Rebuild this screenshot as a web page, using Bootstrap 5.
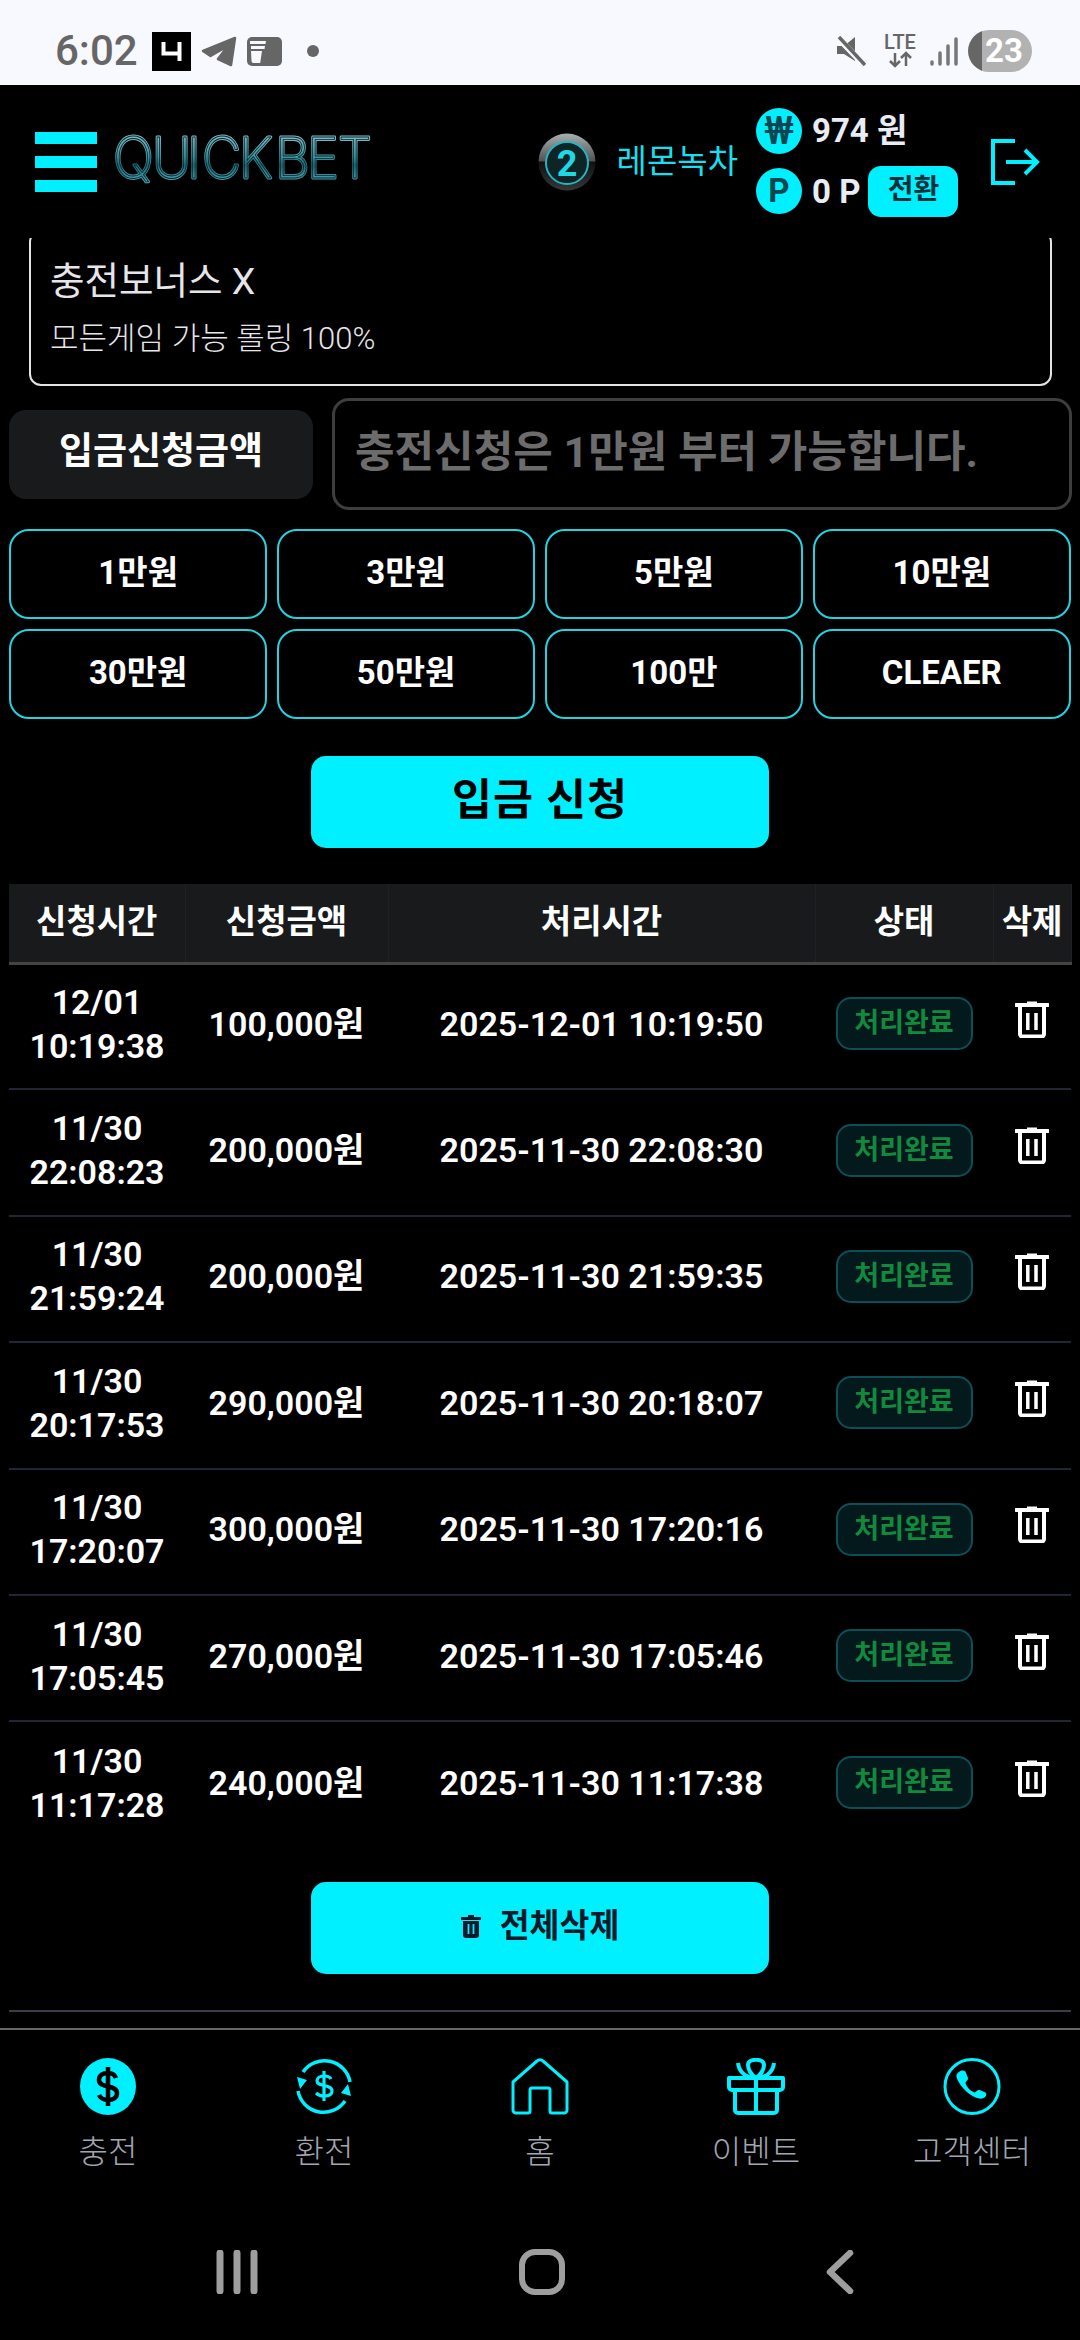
<!DOCTYPE html>
<html lang="ko">
<head>
<meta charset="UTF-8" />
<title>QUICKBET 입금신청</title>
<link href="https://cdn.jsdelivr.net/npm/bootstrap@5.3.2/dist/css/bootstrap.min.css" rel="stylesheet" />
<style>
body { background: #000; color: #fff; font-family: Roboto, "Noto Sans CJK KR", sans-serif; overflow: hidden; }
.app-shell { height: 2340px; width: 1080px; }
.status-strip { height: 85px; background: #f8f8ff; padding: 17px 48px 0 55px; color: #666; flex: none; }
.status-time { font-size: 42px; font-weight: 500; line-height: 1; margin-right: 3px; width: 84px; white-space: nowrap; }
.status-left { gap: 10px; }
.status-dot { width: 12px; height: 12px; border-radius: 50%; background: #666; margin-left: 15px; }
.status-right { gap: 13px; }
.batt-pill { width: 64px; height: 42px; border-radius: 21px; background: linear-gradient(90deg, #666 22%, #b2b2b2 22%); color: #fff; font-weight: 700; font-size: 33px; line-height: 42px; text-align: center; margin-left: -3px; padding-left: 8px; }
.top-head { height: 153px; padding: 0 40px 0 35px; background: #000; flex: none; position: relative; z-index: 2; }
.burger-bars { width: 62px; gap: 12px; margin-right: 17px; }
.burger-bars span { height: 12px; background: #00f0ff; }
.nick-name { color: #18dfee; font-size: 33px; font-weight: 400; margin: 0 18px 0 21px; white-space: nowrap; }
.money-col { gap: 10px; width: 234px; }
.coin-dot { width: 46px; height: 46px; border-radius: 50%; background: #00f0ff; color: #0c4650; font-weight: 700; font-size: 33px; line-height: 46px; text-align: center; margin-right: 10px; flex: none; }
.coin-won { font-size: 38px; font-weight: 500; }
.money-val { font-size: 33px; font-weight: 700; color: #e8ecf4; white-space: nowrap; }
.swap-btn { background: #00f0ff; color: #06303a; border: 0; border-radius: 13px; width: 90px; height: 51px; font-size: 28px; font-weight: 700; padding: 0 0 2px; margin-left: 8px; }
.page-body { padding: 0 9px; min-height: 0; overflow: hidden; }
.promo-box { margin: -8px 19px 0 20px; height: 156px; border: 2px solid #e4e4e8; border-radius: 12px; padding: 24px 19px 0; color: #e6e6ea; }
.promo-title { font-size: 37.500px; line-height: 50px; margin-bottom: 11px; }
.promo-sub { font-size: 31px; line-height: 44px; font-weight: 300; }
.amount-row { margin-top: 12px; gap: 19px; }
.amount-label { width: 304px; height: 89px; background: #191a1c; border-radius: 17px; font-size: 37px; font-weight: 700; flex: none; padding-bottom: 4px; }
.amount-input { height: 112px; border: 3px solid #3e3e3e; border-radius: 17px; background: #000; font-size: 43px; font-weight: 700; padding: 0 20px 5px; color: #fff; margin-right: -1px; }
.amount-input::placeholder { color: #6c6c6c; opacity: 1; }
.chip-grid { display: grid; grid-template-columns: repeat(4, 1fr); gap: 10px 9.5px; margin-top: 19px; }
.chip-btn { height: 90px; background: #000; border: 2px solid #22d3e3; border-radius: 20px; color: #fff; font-size: 33px; font-weight: 700; padding: 0 0 3px; }
.cyan-btn { display: flex; align-items: center; justify-content: center; width: 458px; height: 92px; background: #00f0ff; border: 0; border-radius: 15px; margin-left: auto; margin-right: auto; padding: 0 0 3px; font-weight: 700; }
.apply-btn { font-size: 43.500px; color: #000; margin-top: 37px; letter-spacing: 1px; }
.wipe-btn { font-size: 32.500px; color: #0b1a2a; gap: 19px; margin-top: 34px; }
.hist-table { --bs-table-bg: transparent; --bs-table-color: #fff; table-layout: fixed; width: 1062px; margin: 36px 0 0; }
.hist-table th { background: #191a1c; height: 79px; font-size: 33px; font-weight: 700; color: #fff; border-bottom: 3px solid #444; border-right: 1px solid #202124; padding: 0 0 2px; text-align: center; vertical-align: middle; }
.hist-table td { height: 126.4px; font-size: 34px; font-weight: 600; line-height: 44px; border-bottom: 2px solid #1f2736; padding: 0 0 5px; text-align: center; vertical-align: middle; white-space: nowrap; }
.hist-table tbody tr:last-child td { border-bottom: 0; }
.done-tag { display: inline-block; width: 137px; height: 53px; line-height: 49px; border: 2px solid #0d4f55; border-radius: 15px; background: #04191c; color: #128a3e; font-size: 27px; font-weight: 700; }
.trash-ic { display: block; margin: 0 auto 10px; color: #fff; }
.page-rule { height: 2px; background: #3a3d47; margin-top: 36px; flex: none; }
.tab-row { border-top: 2px solid #666; height: 312px; flex: none; }
.tab-cell { width: 216px; padding-top: 28px; color: #a2a6b2; font-size: 32px; font-weight: 300; line-height: 40px; gap: 17px; }
.soft-keys { height: 46px; margin-top: 77px; padding: 0 226px 0 216px; }
</style>
</head>
<body>
<svg width="0" height="0" class="position-absolute">
  <defs>
    <symbol id="trash-sym" viewBox="0 0 34 38">
      <path d="M12 3V1.500h10V3h11a1 1 0 0 1 0 4H1a1 1 0 0 1 0-4z" fill="currentColor" />
      <path d="M5 6v28a2.500 2.500 0 0 0 2.500 2.500h19A2.500 2.500 0 0 0 29 34V6" fill="none" stroke="currentColor" stroke-width="4" />
      <path d="M12.800 13v17M21 13v17" fill="none" stroke="currentColor" stroke-width="3.500" />
    </symbol>
    <linearGradient id="logo-grad" x1="0" y1="0" x2="0" y2="1">
      <stop offset="0" stop-color="#a8d4da" />
      <stop offset=".5" stop-color="#3f96a4" />
      <stop offset=".62" stop-color="#1f6a78" />
      <stop offset="1" stop-color="#63c8d6" />
    </linearGradient>
    <linearGradient id="lvl-grad" x1="0" y1="0" x2="0" y2="1">
      <stop offset="0" stop-color="#a9aeb0" />
      <stop offset=".48" stop-color="#4e5356" />
      <stop offset=".5" stop-color="#111" />
      <stop offset="1" stop-color="#33363a" />
    </linearGradient>
    <text id="logo-word" transform="scale(1 1.050)" x="-1 38 73 88 125 161 193 224" y="39" font-family="Inter, Roboto, sans-serif" font-size="54" font-weight="200" stroke-linejoin="round">QUICKBET</text>
  </defs>
</svg>

<div class="app-shell d-flex flex-column">
  <div class="status-strip d-flex align-items-center justify-content-between">
    <div class="status-left d-flex align-items-center">
      <span class="status-time">6:02</span>
      <svg width="39" height="39" viewBox="0 0 39 39"><rect width="39" height="39" fill="#000" /><path d="M11.500 10v11.500H29M27.500 10v19" fill="none" stroke="#fff" stroke-width="4" /></svg>
      <svg width="36" height="31" viewBox="0 0 36 31"><path d="M2 15 34 2 30 29 17 23 27 10 9.500 20z" fill="#666" stroke="#666" stroke-width="2.500" stroke-linejoin="round" /></svg>
      <svg width="35" height="29" viewBox="0 0 35 29"><rect width="35" height="29" rx="5" fill="#666" /><path d="M3 4h16l-.5 3H3zM4 9h14l-.5 3H4zM4 14h11l-1.800 12H6.500a2 2 0 0 1-2-2z" fill="#f8f8ff" /></svg>
      <span class="status-dot"></span>
    </div>
    <div class="status-right d-flex align-items-center">
      <svg width="30" height="30" viewBox="0 0 30 30" class="me-1"><path d="M1 10h7l11-9v24L8 18H1z" fill="#666" /><path d="M3 3l25 26" stroke="#f8f8ff" stroke-width="6" /><path d="M3 1l26 28" stroke="#666" stroke-width="3.500" /></svg>
      <svg width="34" height="44" viewBox="0 -6 34 44"><text x="17" y="14" font-size="20" font-weight="500" text-anchor="middle" fill="#666" font-family="Roboto">LTE</text><path d="M12 18v13M7 26l5 5 5-5M23 31V18M18 23l5-5 5 5" fill="none" stroke="#666" stroke-width="2.500" /></svg>
      <svg width="28" height="29" viewBox="0 0 28 29"><path d="M2 25v2M10 16v11M18 9v18M26 2v25" stroke="#777" stroke-width="3.500" stroke-linecap="round" /></svg>
      <span class="batt-pill">23</span>
    </div>
  </div>

  <header class="top-head d-flex align-items-center">
    <div class="burger-bars d-flex flex-column flex-shrink-0"><span></span><span></span><span></span></div>
    <svg width="258" height="50" viewBox="0 0 258 50" class="flex-shrink-0 overflow-visible">
      <use href="#logo-word" fill="#000" stroke="url(#logo-grad)" stroke-width="2.800" />
      <use href="#logo-word" fill="none" stroke="#062227" stroke-width=".8" />
    </svg>
    <svg width="58" height="58" viewBox="0 0 58 58" class="flex-shrink-0 ms-auto">
      <circle cx="29" cy="29" r="28.500" fill="url(#lvl-grad)" />
      <circle cx="29" cy="30" r="21" fill="#0f2427" stroke="#25b5bf" stroke-width="2" />
      <text x="29" y="43" font-family="Roboto" font-size="36" font-weight="700" text-anchor="middle" fill="#1ed8e6">2</text>
    </svg>
    <span class="nick-name">레몬녹차</span>
    <div class="money-col d-flex flex-column flex-shrink-0">
      <div class="d-flex align-items-center"><span class="coin-dot coin-won">₩</span><span class="money-val">974 원</span></div>
      <div class="d-flex align-items-center"><span class="coin-dot">P</span><span class="money-val">0 P</span><button class="swap-btn">전환</button></div>
    </div>
    <svg width="50" height="46" viewBox="0 0 50 46" class="flex-shrink-0">
      <path d="M25 2H3v42h22M16 23h31M35 11l12 12-12 12" fill="none" stroke="#00f0ff" stroke-width="4" />
    </svg>
  </header>

  <main class="page-body flex-grow-1 d-flex flex-column">
    <div class="promo-box flex-shrink-0">
      <div class="promo-title">충전보너스 X</div>
      <div class="promo-sub">모든게임 가능 롤링 100%</div>
    </div>

    <div class="amount-row d-flex align-items-center">
      <div class="amount-label d-flex align-items-center justify-content-center">입금신청금액</div>
      <input class="amount-input form-control" type="text" placeholder="충전신청은 1만원 부터 가능합니다." />
    </div>

    <div class="chip-grid">
      <button class="chip-btn">1만원</button>
      <button class="chip-btn">3만원</button>
      <button class="chip-btn">5만원</button>
      <button class="chip-btn">10만원</button>
      <button class="chip-btn">30만원</button>
      <button class="chip-btn">50만원</button>
      <button class="chip-btn">100만</button>
      <button class="chip-btn">CLEAER</button>
    </div>

    <button class="cyan-btn apply-btn flex-shrink-0">입금 신청</button>

    <table class="table hist-table">
      <colgroup><col style="width:176px"><col style="width:203px"><col style="width:427px"><col style="width:178px"><col style="width:78px"></colgroup>
      <thead>
        <tr><th>신청시간</th><th>신청금액</th><th>처리시간</th><th>상태</th><th>삭제</th></tr>
      </thead>
      <tbody>
        <tr><td>12/01<br>10:19:38</td><td>100,000원</td><td>2025-12-01 10:19:50</td><td><span class="done-tag">처리완료</span></td><td><svg width="34" height="38" class="trash-ic"><use href="#trash-sym" /></svg></td></tr>
        <tr><td>11/30<br>22:08:23</td><td>200,000원</td><td>2025-11-30 22:08:30</td><td><span class="done-tag">처리완료</span></td><td><svg width="34" height="38" class="trash-ic"><use href="#trash-sym" /></svg></td></tr>
        <tr><td>11/30<br>21:59:24</td><td>200,000원</td><td>2025-11-30 21:59:35</td><td><span class="done-tag">처리완료</span></td><td><svg width="34" height="38" class="trash-ic"><use href="#trash-sym" /></svg></td></tr>
        <tr><td>11/30<br>20:17:53</td><td>290,000원</td><td>2025-11-30 20:18:07</td><td><span class="done-tag">처리완료</span></td><td><svg width="34" height="38" class="trash-ic"><use href="#trash-sym" /></svg></td></tr>
        <tr><td>11/30<br>17:20:07</td><td>300,000원</td><td>2025-11-30 17:20:16</td><td><span class="done-tag">처리완료</span></td><td><svg width="34" height="38" class="trash-ic"><use href="#trash-sym" /></svg></td></tr>
        <tr><td>11/30<br>17:05:45</td><td>270,000원</td><td>2025-11-30 17:05:46</td><td><span class="done-tag">처리완료</span></td><td><svg width="34" height="38" class="trash-ic"><use href="#trash-sym" /></svg></td></tr>
        <tr><td>11/30<br>11:17:28</td><td>240,000원</td><td>2025-11-30 11:17:38</td><td><span class="done-tag">처리완료</span></td><td><svg width="34" height="38" class="trash-ic"><use href="#trash-sym" /></svg></td></tr>
      </tbody>
    </table>

    <button class="cyan-btn wipe-btn flex-shrink-0">
      <svg width="20" height="24" viewBox="0 0 20 24"><path d="M7 1h6v2h6a1 1 0 0 1 0 3H1a1 1 0 0 1 0-3h6zM2 7h16v14a3 3 0 0 1-3 3H5a3 3 0 0 1-3-3z" fill="#0b1a2a" /><path d="M7.500 10v10M12.500 10v10" stroke="#00f0ff" stroke-width="1.800" /></svg>
      <span>전체삭제</span>
    </button>
    <div class="page-rule"></div>
  </main>

  <footer class="tab-row">
    <nav class="d-flex">
      <div class="tab-cell d-flex flex-column align-items-center">
        <svg width="58" height="57" viewBox="0 0 58 57"><ellipse cx="29" cy="28.500" rx="28" ry="28.500" fill="#00f0ff" /><path d="M37 20c-1-3-4-5-8-5-5 0-9 2-9 7 0 9 18 4 18 13 0 5-4 7-9 7-4 0-8-2-9-5M29 9v39" fill="none" stroke="#000" stroke-width="4.500" /></svg>
        <span>충전</span>
      </div>
      <div class="tab-cell d-flex flex-column align-items-center">
        <svg width="58" height="57" viewBox="0 0 58 57" fill="none" stroke="#00f0ff"><path d="M8 14A26 26 0 0 1 55 24M50 43A26 26 0 0 1 3 33" stroke-width="3.500" /><path d="M2 19l10 3-7 9zM56 38l-10-3 7-9z" fill="#00f0ff" stroke="none" /><path d="M36 21c-1-2-4-3-7-3-4 0-7 2-7 5 0 6 15 3 15 10 0 3-3 5-8 5-3 0-6-1-8-3M29 13v30" stroke-width="3.200" /></svg>
        <span>환전</span>
      </div>
      <div class="tab-cell d-flex flex-column align-items-center">
        <svg width="58" height="57" viewBox="0 0 58 57" fill="none" stroke="#00f0ff" stroke-width="3" stroke-linejoin="round"><path d="M2 24 26 3a4 4 0 0 1 6 0l24 21v28a3 3 0 0 1-3 3H41a2 2 0 0 1-2-2V32a2 2 0 0 0-2-2H21a2 2 0 0 0-2 2v21a2 2 0 0 1-2 2H5a3 3 0 0 1-3-3z" /></svg>
        <span>홈</span>
      </div>
      <div class="tab-cell d-flex flex-column align-items-center">
        <svg width="58" height="57" viewBox="0 0 58 57" fill="none" stroke="#00f0ff" stroke-width="4" stroke-linejoin="round"><path d="M2 20h54v9a3 3 0 0 1-3 3H5a3 3 0 0 1-3-3zM8 32v20a3 3 0 0 0 3 3h36a3 3 0 0 0 3-3V32M29 20v35" /><path d="M29 20c-5-3-8-9-8-13 0-7 16-7 16 0 0 4-3 10-8 13zM29 20C20 20 12 15 11 5M29 20C38 20 46 15 47 5" /></svg>
        <span>이벤트</span>
      </div>
      <div class="tab-cell d-flex flex-column align-items-center">
        <svg width="58" height="57" viewBox="0 0 58 57"><circle cx="29" cy="28.500" r="27" fill="none" stroke="#00f0ff" stroke-width="3" /><path d="M16 14c3-2 6-2 7 1l2 5c.5 2-2 3-2.500 5 1 4 5 8 9 9.500 2-.5 3-3 5-2.500l5 2c3 1 2 5-1 6-3 1.500-8 .5-14-4-7-5-12-13-13-17-.5-2 .5-4 2.500-5z" fill="#00f0ff" /></svg>
        <span>고객센터</span>
      </div>
    </nav>
    <div class="soft-keys d-flex align-items-center justify-content-between">
      <svg width="42" height="44" viewBox="0 0 42 44"><path d="M4 3v38M21 3v38M38 3v38" stroke="#9e9e9e" stroke-width="7" stroke-linecap="round" /></svg>
      <svg width="46" height="46" viewBox="0 0 46 46"><rect x="3" y="3" width="40" height="40" rx="13" fill="none" stroke="#9e9e9e" stroke-width="6" /></svg>
      <svg width="28" height="44" viewBox="0 0 28 44"><path d="M24 3 4 22l20 19" fill="none" stroke="#9e9e9e" stroke-width="6.500" stroke-linecap="round" stroke-linejoin="round" /></svg>
    </div>
  </footer>
</div>
<script src="https://cdn.jsdelivr.net/npm/bootstrap@5.3.2/dist/js/bootstrap.bundle.min.js"></script>
</body>
</html>
